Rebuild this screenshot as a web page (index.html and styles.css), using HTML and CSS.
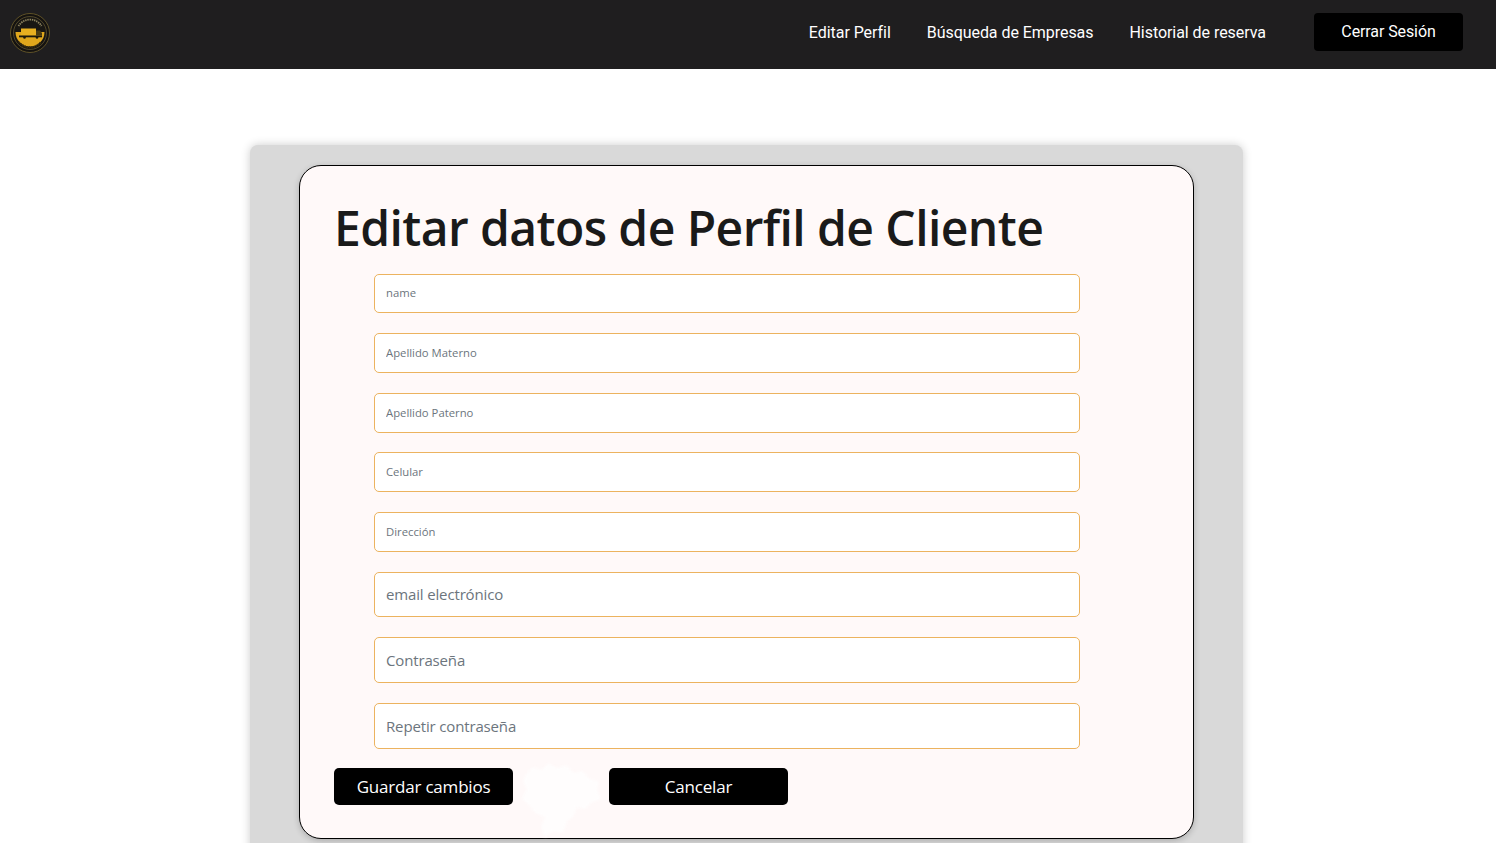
FILE: index.html
```html
<!DOCTYPE html>
<html lang="es">
<head>
    <meta charset="UTF-8">
    <meta name="viewport" content="width=device-width, initial-scale=1.0">
    <title>Editar Perfil</title>
    <link rel="stylesheet" href="styles.css">
</head>
<body>

<nav class="navbar">
    <svg class="logo" viewBox="0 0 40 40" width="40" height="40" aria-hidden="true">
        <circle cx="20" cy="20" r="19.5" fill="#141210" stroke="#5f5228" stroke-width="1"/>
        <circle cx="20" cy="20" r="16.5" fill="#191713" stroke="#8a7a45" stroke-width="0.5"/>
        <path d="M5.5 19 H34.5 A14.5 14.5 0 0 1 5.5 19 Z" fill="#e0a71c"/>
        <path d="M9 29 A14 14 0 0 0 31 29" fill="none" stroke="#3a2e0c" stroke-width="2" stroke-dasharray="1.4 0.9"/>
        <rect x="11" y="15.5" width="15" height="6.5" fill="#e8b020"/>
        <path d="M26 17.5 h4 l2 2.5 v2.5 h-6 Z" fill="#4a3c12"/>
        <rect x="9" y="22.5" width="23" height="1.8" fill="#1d1a0c"/>
        <circle cx="14.5" cy="24.5" r="1.3" fill="#1d1a0c"/>
        <circle cx="27" cy="24.5" r="1.3" fill="#1d1a0c"/>
        <path d="M8.5 13 A13.5 13.5 0 0 1 31.5 13" fill="none" stroke="#8f8560" stroke-width="1.8" stroke-dasharray="1.4 0.8"/>
    </svg>
    <div class="nav-links">
        <a href="#">Editar Perfil</a>
        <a href="#">Búsqueda de Empresas</a>
        <a href="#">Historial de reserva</a>
    </div>
    <button class="logout">Cerrar Sesión</button>
</nav>

<main class="panel">
    <form class="card">
        <svg class="stain" viewBox="0 0 90 80" width="90" height="80" aria-hidden="true">
            <path d="M8 12 L14 6 L22 9 L30 2 L38 7 L48 4 L54 12 L64 10 L70 18 L80 20 L78 30 L82 38 L72 42 L66 48 L58 46 L54 56 L48 60 L44 72 L34 70 L26 76 L22 66 L26 56 L16 52 L10 44 L3 38 L8 28 L4 20 Z" fill="#fffdfd"/>
        </svg>
        <h1>Editar datos de Perfil de Cliente</h1>
        <div class="fields">
            <input class="small" type="text" placeholder="name">
            <input class="small" type="text" placeholder="Apellido Materno">
            <input class="small" type="text" placeholder="Apellido Paterno">
            <input class="small" type="text" placeholder="Celular">
            <input class="small" type="text" placeholder="Dirección">
            <input class="medium" type="email" placeholder="email electrónico">
            <input class="large" type="password" placeholder="Contraseña">
            <input class="large" type="password" placeholder="Repetir contraseña">
        </div>
        <div class="actions">
            <button type="submit">Guardar cambios</button>
            <button type="button">Cancelar</button>
        </div>
    </form>
</main>

</body>
</html>
```

FILE: styles.css
```css
html, body {
    height: 100%;
    overflow: hidden;
}

body {
    margin: 0;
    background-color: #fff;
    font-family: "Open Sans", "Noto Sans", sans-serif;
}

.navbar {
    display: flex;
    align-items: center;
    box-sizing: border-box;
    height: 69px;
    padding: 0 33px 4px 10px;
    background-color: #1f1e1f;
}

.logo {
    flex: none;
}

.nav-links {
    display: flex;
    gap: 36px;
    margin-left: auto;
    margin-right: 48px;
}

.nav-links a {
    color: #fff;
    font-family: Roboto, sans-serif;
    font-size: 16px;
    letter-spacing: -0.05px;
    text-decoration: none;
}

.logout {
    width: 149px;
    height: 38px;
    margin-top: -1px;
    padding: 0 0 2px;
    border: none;
    border-radius: 4px;
    background-color: #000;
    color: #fff;
    font-family: Roboto, sans-serif;
    font-size: 16px;
    letter-spacing: -0.1px;
}

.panel {
    width: 895px;
    margin: 76px 0 0 250px;
    padding: 20px 49px 40px;
    border-radius: 8px;
    background-color: #d9d9d9;
    box-shadow: 0 0 10px rgba(0, 0, 0, 0.2);
}

.card {
    position: relative;
    box-sizing: border-box;
    height: 674px;
    padding: 28px 34px 0;
    border: 1px solid #000;
    border-radius: 22px;
    background-color: #fff9f9;
    box-shadow: 0 2px 6px rgba(0, 0, 0, 0.2);
}

.stain {
    position: absolute;
    left: 219px;
    top: 595px;
    filter: blur(1.5px);
}

h1 {
    position: relative;
    margin: 0;
    color: #1a1a1a;
    font-size: 48px;
    font-weight: 600;
    line-height: 68px;
    letter-spacing: -0.58px;
}

.fields {
    position: relative;
    display: flex;
    flex-direction: column;
    width: 706px;
    margin: 11.6px 0 0 40px;
}

.fields input {
    box-sizing: border-box;
    width: 100%;
    margin-bottom: 19.8px;
    padding: 0 11px;
    border: 1px solid #ecb35f;
    border-radius: 5px;
    background-color: #fff;
    font-family: inherit;
}

.fields input::placeholder {
    color: #6c757d;
    opacity: 1;
}

.fields .small {
    height: 39.8px;
    padding-bottom: 1px;
    font-size: 11.3px;
}

.fields .medium {
    height: 45.4px;
    font-size: 15px;
    letter-spacing: -0.15px;
}

.fields .large {
    height: 46px;
    font-size: 15px;
    letter-spacing: -0.15px;
}

.actions {
    position: relative;
    display: flex;
    gap: 96px;
}

.actions button {
    width: 179px;
    height: 37px;
    padding: 0;
    border: none;
    border-radius: 5px;
    background-color: #000;
    color: #fff;
    font-family: inherit;
    font-size: 17px;
    letter-spacing: -0.2px;
}
```
